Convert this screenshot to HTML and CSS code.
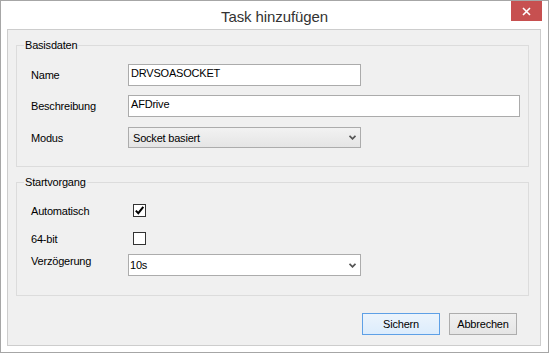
FILE: index.html
```html
<!DOCTYPE html>
<html lang="de">
<head>
<meta charset="utf-8">
<title>Task hinzufügen</title>
<link rel="stylesheet" href="styles.css">
</head>
<body>
<div class="window">
  <div class="titlebar">
    <div class="tb-side"></div>
    <div class="title">Task hinzufügen</div>
    <div class="tb-side tb-right">
      <div class="close">
        <svg width="9" height="9" viewBox="0 0 9 9"><path d="M1 1 L8 8 M8 1 L1 8" stroke="#fff" stroke-width="1.6" fill="none"/></svg>
      </div>
    </div>
  </div>
  <div class="frame">
    <div class="client">
      <div class="group group-basis">
        <div class="group-title">Basisdaten</div>
        <div class="form form-basis">
          <div class="row row-tb">
            <div class="label">Name</div>
            <div class="textbox tb-short">DRVSOASOCKET</div>
          </div>
          <div class="row row-tb">
            <div class="label">Beschreibung</div>
            <div class="textbox tb-long">AFDrive</div>
          </div>
          <div class="row row-select">
            <div class="label">Modus</div>
            <div class="select select-list">
              <span>Socket basiert</span>
              <svg class="chev" width="7" height="5" viewBox="0 0 7 5"><path d="M0.5 0.8 L3.5 3.8 L6.5 0.8" stroke="#555" stroke-width="1.8" fill="none"/></svg>
            </div>
          </div>
        </div>
      </div>
      <div class="group group-start">
        <div class="group-title">Startvorgang</div>
        <div class="form form-start">
          <div class="row row-cb">
            <div class="label">Automatisch</div>
            <div class="checkbox">
              <svg width="11" height="11" viewBox="0 0 11 11"><path d="M1.8 5.6 L4.3 8.2 L9.3 1.8" stroke="#000" stroke-width="2" fill="none"/></svg>
            </div>
          </div>
          <div class="row row-cb">
            <div class="label">64-bit</div>
            <div class="checkbox"></div>
          </div>
          <div class="row row-combo">
            <div class="label label-top">Verzögerung</div>
            <div class="select select-edit">
              <span>10s</span>
              <svg class="chev" width="7" height="5" viewBox="0 0 7 5"><path d="M0.5 0.8 L3.5 3.8 L6.5 0.8" stroke="#555" stroke-width="1.8" fill="none"/></svg>
            </div>
          </div>
        </div>
      </div>
      <div class="buttons">
        <div class="button button-default">Sichern</div>
        <div class="button button-cancel">Abbrechen</div>
      </div>
    </div>
  </div>
</div>
</body>
</html>
```

FILE: styles.css
```css
* { box-sizing: border-box; }
html, body { margin: 0; padding: 0; }
body {
  width: 549px;
  height: 353px;
  font-family: "Liberation Sans", Arial, sans-serif;
  font-size: 11px;
  letter-spacing: -0.2px;
  color: #000;
  background: #fff;
}
.window {
  width: 549px;
  height: 353px;
  border: 1px solid #a6a6a6;
  background: #fff;
  display: flex;
  flex-direction: column;
}
.titlebar {
  height: 28px;
  display: grid;
  grid-template-columns: 1fr auto 1fr;
}
.title {
  font-size: 15px;
  letter-spacing: -0.1px;
  line-height: 25px;
  padding-top: 3px;
  color: #333;
  white-space: nowrap;
}
.tb-right {
  display: flex;
  justify-content: flex-end;
  align-items: flex-start;
  padding-right: 6px;
}
.close {
  width: 31px;
  height: 20px;
  background: #c75050;
  display: flex;
  align-items: center;
  justify-content: center;
}
.frame {
  flex: 1;
  padding: 0 7px 6px 6px;
  display: flex;
}
.client {
  flex: 1;
  border: 1px solid #cdcdcd;
  background: #f0f0f0;
  padding: 15px 11px 0 8px;
  display: flex;
  flex-direction: column;
}
.group {
  border: 1px solid #dcdcdc;
  padding: 0 0 0 14px;
}
.group-title {
  line-height: 14px;
  margin-top: -8px;
  margin-left: -7px;
  padding: 0 1px;
  width: fit-content;
  background: #f0f0f0;
}
.group-basis { height: 122px; }
.group-start { height: 114px; margin-top: 15px; }
.form { display: flex; flex-direction: column; }
.form-basis { padding-top: 12px; }
.form-start { padding-top: 15px; }
.row { display: flex; align-items: center; }
.label { width: 97px; line-height: 14px; white-space: nowrap; }
.label-top { align-self: flex-start; }
.row-tb { height: 22px; }
.row-tb + .row-tb { margin-top: 9px; }
.row-select { height: 21px; margin-top: 10px; }
.row-cb { height: 13px; }
.row-cb + .row-cb { margin-top: 15px; }
.row-combo { height: 22px; margin-top: 9px; }
.textbox {
  height: 22px;
  border: 1px solid #ababab;
  background: #fff;
  padding: 1px 2px 0;
  line-height: 14px;
  white-space: nowrap;
}
.tb-short { width: 233px; }
.tb-long { width: 392px; }
.select {
  width: 233px;
  border: 1px solid #acacac;
  display: flex;
  align-items: center;
  justify-content: space-between;
  padding: 0 4px 0 4px;
  line-height: 14px;
}
.select-list {
  height: 21px;
  background: linear-gradient(#f2f2f2, #e5e5e5);
}
.select-edit {
  height: 22px;
  background: #fff;
  padding-left: 1px;
}
.checkbox {
  width: 13px;
  height: 13px;
  margin-left: 5px;
  border: 1px solid #333;
  background: #fff;
  display: flex;
  align-items: center;
  justify-content: center;
}
.buttons {
  display: flex;
  justify-content: flex-end;
  gap: 9px;
  margin-top: 17px;
  padding-right: 12px;
}
.button {
  height: 22px;
  border: 1px solid #adadad;
  background: linear-gradient(#f0f0f0, #e5e5e5);
  display: flex;
  align-items: center;
  justify-content: center;
  line-height: 14px;
}
.button-default {
  width: 78px;
  border-color: #5ea0e6;
  background: linear-gradient(#ecf4fc, #dcecfc);
}
.button-cancel { width: 68px; }
```
